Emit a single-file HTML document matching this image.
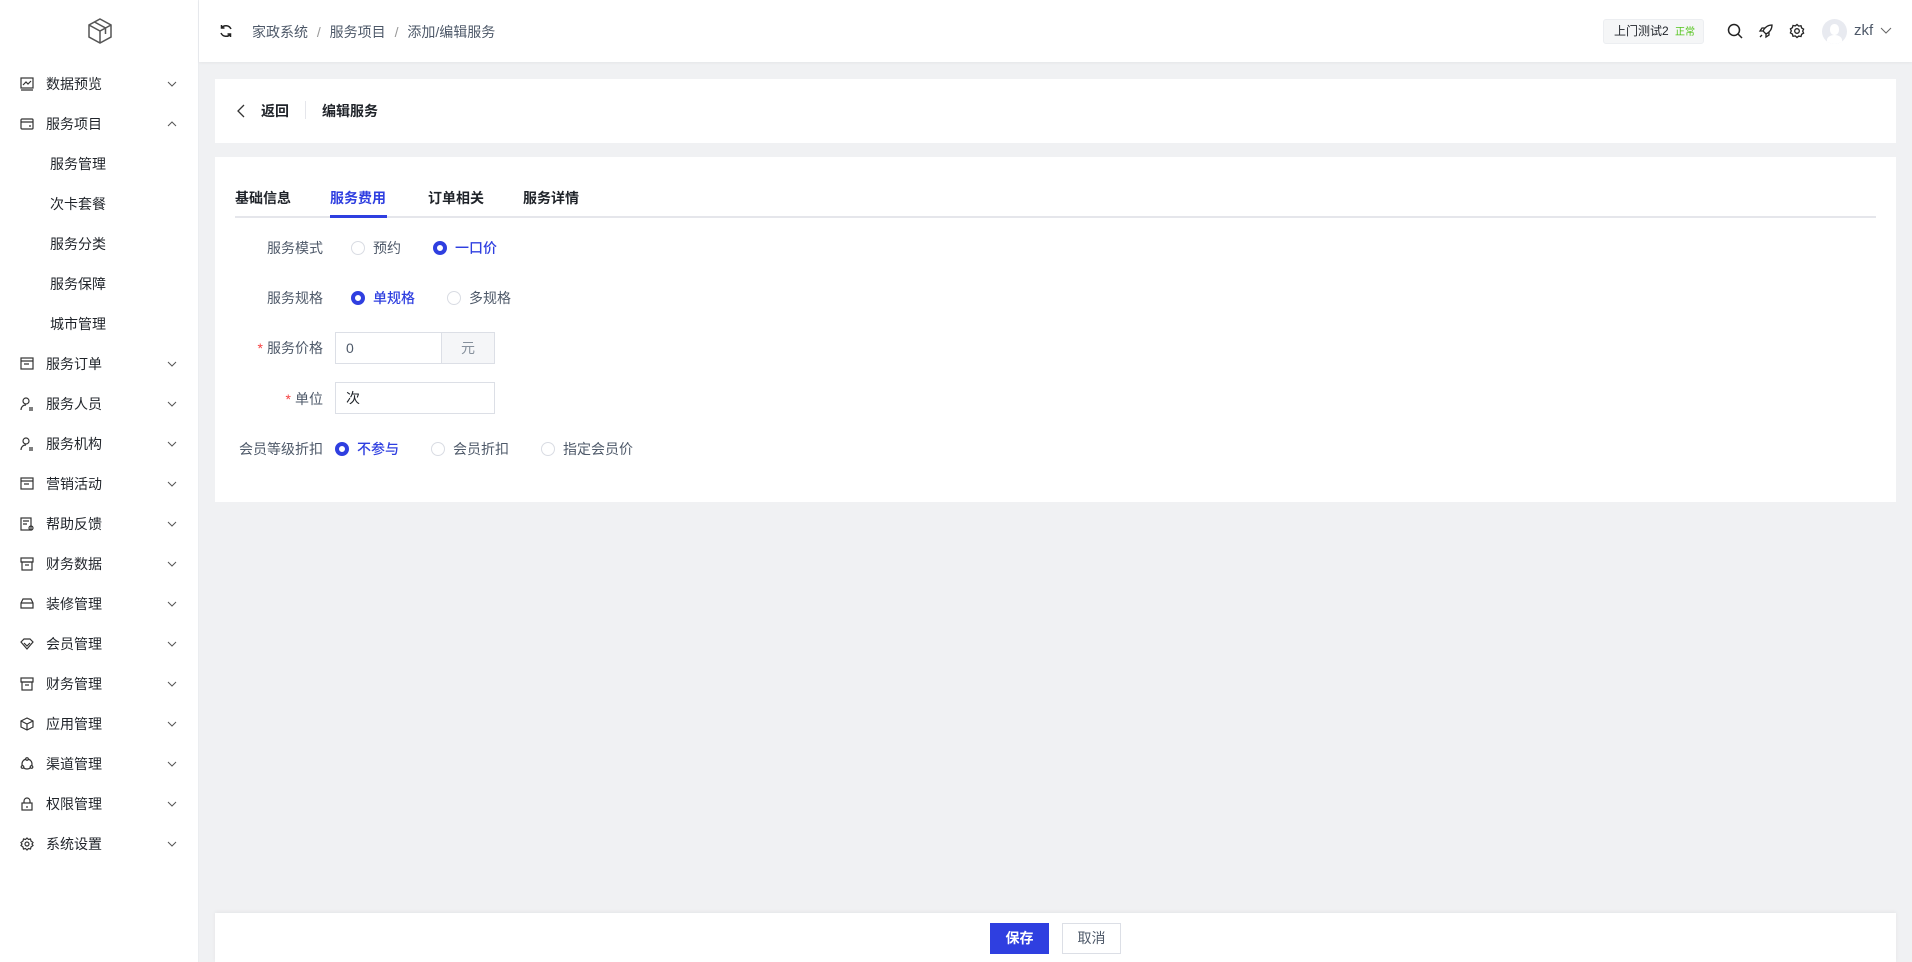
<!DOCTYPE html>
<html><head><meta charset="utf-8"><style>
*{box-sizing:border-box;margin:0;padding:0}
body{width:1912px;height:962px;background:#f0f1f3;font-family:"Liberation Sans","Noto Sans CJK SC",sans-serif;font-size:14px;color:#1f2329;position:relative;overflow:hidden}
.side{position:absolute;left:0;top:0;width:199px;height:962px;background:#fff;border-right:1px solid #ebedf0}
.mi{position:absolute;left:0;width:199px;height:40px;line-height:40px;margin-top:1px}
.mi .ic{position:absolute;left:20px;top:13px;width:14px;height:14px}
.mi .t{position:absolute;left:46px}
.mi .ch{position:absolute;left:167px;top:13px}
.sub .t{left:50px}
.hdr{position:absolute;left:199px;top:0;right:0;height:62px;background:#fff;box-shadow:0 1px 3px rgba(0,0,0,.05)}
.card{position:absolute;left:215px;width:1681px;background:#fff}
.lbl{position:absolute;width:120px;text-align:right;left:203px;color:#4e5969}
.r{position:absolute;width:14px;height:14px;border-radius:50%;border:1px solid #d9dce3;background:#fff}
.r.on{border:4px solid #2f3fe0}
.rt{position:absolute;color:#4e5969}
.rt.on{color:#2f3fe0;font-weight:500}
.star{color:#f53f3f;margin-right:4px}
</style></head><body>
<div class="side">
<svg style="position:absolute;left:87px;top:17px" width="26" height="28" viewBox="0 0 26 28" fill="none" stroke="#555" stroke-width="1.5"><path d="M13 2 L24 8 V20 L13 26 L2 20 V8Z M2 8 L13 14 L24 8 M13 14 V26 M7.5 5 L18.5 11 V17"/></svg>
<div class="mi" style="top:63px"><svg class="ic" viewBox="0 0 14 14" fill="none" stroke="#333" stroke-width="1.2"><rect x="1" y="1" width="12" height="10"/><path d="M3 8l3-3 2 2 3-3M1 13h12"/></svg><span class="t">数据预览</span><svg class="ch" width="10" height="14" viewBox="0 0 10 14" fill="none" stroke="#555"><path d="M1 5l4 4 4-4"/></svg></div>
<div class="mi" style="top:103px"><svg class="ic" viewBox="0 0 14 14" fill="none" stroke="#333" stroke-width="1.2"><rect x="1" y="2" width="12" height="10" rx="1"/><path d="M1 5h12M9 9h2"/></svg><span class="t">服务项目</span><svg class="ch" width="10" height="14" viewBox="0 0 10 14" fill="none" stroke="#555"><path d="M1 9l4-4 4 4"/></svg></div>
<div class="mi sub" style="top:143px"><span class="t">服务管理</span></div>
<div class="mi sub" style="top:183px"><span class="t">次卡套餐</span></div>
<div class="mi sub" style="top:223px"><span class="t">服务分类</span></div>
<div class="mi sub" style="top:263px"><span class="t">服务保障</span></div>
<div class="mi sub" style="top:303px"><span class="t">城市管理</span></div>
<div class="mi" style="top:343px"><svg class="ic" viewBox="0 0 14 14" fill="none" stroke="#333" stroke-width="1.2"><rect x="1" y="1" width="12" height="11"/><path d="M1 4h12M4 7h5"/></svg><span class="t">服务订单</span><svg class="ch" width="10" height="14" viewBox="0 0 10 14" fill="none" stroke="#555"><path d="M1 5l4 4 4-4"/></svg></div>
<div class="mi" style="top:383px"><svg class="ic" viewBox="0 0 14 14" fill="none" stroke="#333" stroke-width="1.2"><circle cx="6" cy="4" r="3"/><path d="M1 13c0-3 2-5 5-5M9 11h4M9 13h4"/></svg><span class="t">服务人员</span><svg class="ch" width="10" height="14" viewBox="0 0 10 14" fill="none" stroke="#555"><path d="M1 5l4 4 4-4"/></svg></div>
<div class="mi" style="top:423px"><svg class="ic" viewBox="0 0 14 14" fill="none" stroke="#333" stroke-width="1.2"><circle cx="6" cy="4" r="3"/><path d="M1 13c0-3 2-5 5-5M9 11h4M9 13h4"/></svg><span class="t">服务机构</span><svg class="ch" width="10" height="14" viewBox="0 0 10 14" fill="none" stroke="#555"><path d="M1 5l4 4 4-4"/></svg></div>
<div class="mi" style="top:463px"><svg class="ic" viewBox="0 0 14 14" fill="none" stroke="#333" stroke-width="1.2"><rect x="1" y="1" width="12" height="11"/><path d="M1 4h12M4 7h5"/></svg><span class="t">营销活动</span><svg class="ch" width="10" height="14" viewBox="0 0 10 14" fill="none" stroke="#555"><path d="M1 5l4 4 4-4"/></svg></div>
<div class="mi" style="top:503px"><svg class="ic" viewBox="0 0 14 14" fill="none" stroke="#333" stroke-width="1.2"><rect x="1" y="1" width="10" height="12"/><path d="M3 4h6M3 7h4"/><circle cx="11" cy="11" r="2"/></svg><span class="t">帮助反馈</span><svg class="ch" width="10" height="14" viewBox="0 0 10 14" fill="none" stroke="#555"><path d="M1 5l4 4 4-4"/></svg></div>
<div class="mi" style="top:543px"><svg class="ic" viewBox="0 0 14 14" fill="none" stroke="#333" stroke-width="1.2"><rect x="1" y="1" width="12" height="4"/><rect x="2" y="5" width="10" height="8"/><path d="M5 8h4"/></svg><span class="t">财务数据</span><svg class="ch" width="10" height="14" viewBox="0 0 10 14" fill="none" stroke="#555"><path d="M1 5l4 4 4-4"/></svg></div>
<div class="mi" style="top:583px"><svg class="ic" viewBox="0 0 14 14" fill="none" stroke="#333" stroke-width="1.2"><path d="M1 6l2-4h8l2 4v5H1z M1 6h12"/></svg><span class="t">装修管理</span><svg class="ch" width="10" height="14" viewBox="0 0 10 14" fill="none" stroke="#555"><path d="M1 5l4 4 4-4"/></svg></div>
<div class="mi" style="top:623px"><svg class="ic" viewBox="0 0 14 14" fill="none" stroke="#333" stroke-width="1.2"><path d="M1 5l3-3h6l3 3-6 7z M4 6l3 3 3-3"/></svg><span class="t">会员管理</span><svg class="ch" width="10" height="14" viewBox="0 0 10 14" fill="none" stroke="#555"><path d="M1 5l4 4 4-4"/></svg></div>
<div class="mi" style="top:663px"><svg class="ic" viewBox="0 0 14 14" fill="none" stroke="#333" stroke-width="1.2"><rect x="1" y="1" width="12" height="4"/><rect x="2" y="5" width="10" height="8"/><path d="M5 8h4"/></svg><span class="t">财务管理</span><svg class="ch" width="10" height="14" viewBox="0 0 10 14" fill="none" stroke="#555"><path d="M1 5l4 4 4-4"/></svg></div>
<div class="mi" style="top:703px"><svg class="ic" viewBox="0 0 14 14" fill="none" stroke="#333" stroke-width="1.2"><path d="M7 1l6 3v6l-6 3-6-3V4z M1 4l6 3 6-3M7 7v6"/></svg><span class="t">应用管理</span><svg class="ch" width="10" height="14" viewBox="0 0 10 14" fill="none" stroke="#555"><path d="M1 5l4 4 4-4"/></svg></div>
<div class="mi" style="top:743px"><svg class="ic" viewBox="0 0 14 14" fill="none" stroke="#333" stroke-width="1.2"><circle cx="7" cy="7" r="5"/><circle cx="7" cy="2" r="1.3" fill="#fff"/><circle cx="2.5" cy="10" r="1.3" fill="#fff"/><circle cx="11.5" cy="10" r="1.3" fill="#fff"/></svg><span class="t">渠道管理</span><svg class="ch" width="10" height="14" viewBox="0 0 10 14" fill="none" stroke="#555"><path d="M1 5l4 4 4-4"/></svg></div>
<div class="mi" style="top:783px"><svg class="ic" viewBox="0 0 14 14" fill="none" stroke="#333" stroke-width="1.2"><rect x="2" y="6" width="10" height="7"/><path d="M4 6V4a3 3 0 016 0v2M7 9v2"/></svg><span class="t">权限管理</span><svg class="ch" width="10" height="14" viewBox="0 0 10 14" fill="none" stroke="#555"><path d="M1 5l4 4 4-4"/></svg></div>
<div class="mi" style="top:823px"><svg class="ic" viewBox="0 0 14 14" fill="none" stroke="#333" stroke-width="1.2"><circle cx="7" cy="7" r="2"/><path d="M7 1l1.5 1.5 2-.5.5 2L13 5.5 12 7l1 1.5-2 1.5-.5 2-2-.5L7 13l-1.5-1.5-2 .5-.5-2L1 8.5 2 7 1 5.5 3 4l.5-2 2 .5z"/></svg><span class="t">系统设置</span><svg class="ch" width="10" height="14" viewBox="0 0 10 14" fill="none" stroke="#555"><path d="M1 5l4 4 4-4"/></svg></div>
</div>

<div class="hdr">
<svg style="position:absolute;left:20px;top:24px" width="14" height="14" viewBox="0 0 14 14" fill="none" stroke="#222" stroke-width="1.5"><path d="M12 5A5.5 5.5 0 002.5 4M2 9a5.5 5.5 0 009.5 1M2.5 1v3h3M11.5 13v-3h-3"/></svg>
<div style="position:absolute;left:53px;top:22px;color:#4e5969">家政系统 <span style="color:#999;margin:0 5px">/</span> 服务项目 <span style="color:#999;margin:0 5px">/</span> 添加/编辑服务</div>
<div style="position:absolute;left:1404px;top:19px;width:101px;height:25px;background:#f5f6f7;border:1px solid #eceef1;border-radius:3px;font-size:12px;line-height:23px;padding-left:10px">上门测试2 <span style="color:#52c41a;font-size:10px;margin-left:3px">正常</span></div>
<svg style="position:absolute;left:1528px;top:23px" width="16" height="16" viewBox="0 0 16 16" fill="none" stroke="#222" stroke-width="1.5"><circle cx="7" cy="7" r="5.5"/><path d="M11 11l4 4"/></svg>
<svg style="position:absolute;left:1559px;top:23px" width="16" height="16" viewBox="0 0 16 16" fill="none" stroke="#222" stroke-width="1.3"><path d="M14 2c-4 0-7 2-9 6l3 3c4-2 6-5 6-9zM5 8L2 8l2-3h3M8 11v3l3-2V9M4 12l-2 2"/></svg>
<svg style="position:absolute;left:1590px;top:23px" width="16" height="16" viewBox="0 0 16 16" fill="none" stroke="#222" stroke-width="1.3"><circle cx="8" cy="8" r="2.3"/><path d="M8 1.5l1.7 1.6 2.3-.4.6 2.2 2 1.2-.9 2 .9 2-2 1.2-.6 2.2-2.3-.4L8 14.5l-1.7-1.6-2.3.4-.6-2.2-2-1.2.9-2-.9-2 2-1.2.6-2.2 2.3.4z"/></svg>
<div style="position:absolute;left:1623px;top:19px;width:25px;height:25px;border-radius:50%;background:#e8eaf0;overflow:hidden"><div style="position:absolute;left:8px;top:5px;width:9px;height:11px;border-radius:45%;background:#fff"></div><div style="position:absolute;left:5px;top:16px;width:15px;height:10px;border-radius:50% 50% 0 0;background:#fff"></div></div>
<div style="position:absolute;left:1655px;top:22px;font-size:15px;color:#4e5969">zkf</div>
<svg style="position:absolute;left:1681px;top:26px" width="12" height="10" viewBox="0 0 12 10" fill="none" stroke="#666"><path d="M1 2l5 5 5-5"/></svg>
</div>

<div class="card" style="top:79px;height:64px">
<svg style="position:absolute;left:22px;top:25px" width="8" height="14" viewBox="0 0 8 14" fill="none" stroke="#333" stroke-width="1.3"><path d="M7 1L1 7l6 6"/></svg>
<div style="position:absolute;left:46px;top:22px;font-weight:bold">返回</div>
<div style="position:absolute;left:90px;top:22px;width:1px;height:18px;background:#e5e6eb"></div>
<div style="position:absolute;left:107px;top:22px;font-weight:bold">编辑服务</div>
</div>

<div class="card" style="top:157px;height:345px">
<div style="position:absolute;left:20px;right:20px;top:59px;height:2px;background:#e5e6eb"></div>
<div style="position:absolute;left:20px;top:31px;font-weight:bold">基础信息</div>
<div style="position:absolute;left:115px;top:31px;font-weight:bold;color:#2f3fe0">服务费用</div>
<div style="position:absolute;left:115px;top:58px;width:57px;height:3px;background:#2f3fe0"></div>
<div style="position:absolute;left:213px;top:31px;font-weight:bold">订单相关</div>
<div style="position:absolute;left:308px;top:31px;font-weight:bold">服务详情</div>
</div>

<div class="lbl" style="top:238px">服务模式</div>
<div class="r" style="left:351px;top:241px"></div><div class="rt" style="left:373px;top:238px">预约</div>
<div class="r on" style="left:433px;top:241px"></div><div class="rt on" style="left:455px;top:238px">一口价</div>

<div class="lbl" style="top:288px">服务规格</div>
<div class="r on" style="left:351px;top:291px"></div><div class="rt on" style="left:373px;top:288px">单规格</div>
<div class="r" style="left:447px;top:291px"></div><div class="rt" style="left:469px;top:288px">多规格</div>

<div class="lbl" style="top:338px"><span class="star">*</span>服务价格</div>
<div style="position:absolute;left:335px;top:332px;width:160px;height:32px;border:1px solid #dcdfe6;display:flex"><div style="width:105px;padding-left:10px;line-height:30px;color:#4e5969">0</div><div style="flex:1;background:#f5f6f8;border-left:1px solid #dcdfe6;text-align:center;line-height:30px;color:#86909c">元</div></div>

<div class="lbl" style="top:389px"><span class="star">*</span>单位</div>
<div style="position:absolute;left:335px;top:382px;width:160px;height:32px;border:1px solid #dcdfe6;padding-left:10px;line-height:30px">次</div>

<div class="lbl" style="top:439px">会员等级折扣</div>
<div class="r on" style="left:335px;top:442px"></div><div class="rt on" style="left:357px;top:439px">不参与</div>
<div class="r" style="left:431px;top:442px"></div><div class="rt" style="left:453px;top:439px">会员折扣</div>
<div class="r" style="left:541px;top:442px"></div><div class="rt" style="left:563px;top:439px">指定会员价</div>

<div class="card" style="top:913px;height:49px;box-shadow:0 -1px 4px rgba(0,0,0,.05)">
<div style="position:absolute;left:775px;top:10px;width:59px;height:31px;background:#2f3fe0;color:#fff;font-weight:bold;text-align:center;line-height:31px">保存</div>
<div style="position:absolute;left:847px;top:10px;width:59px;height:31px;border:1px solid #dcdfe6;text-align:center;line-height:29px;color:#4e5969">取消</div>
</div>
</body></html>
